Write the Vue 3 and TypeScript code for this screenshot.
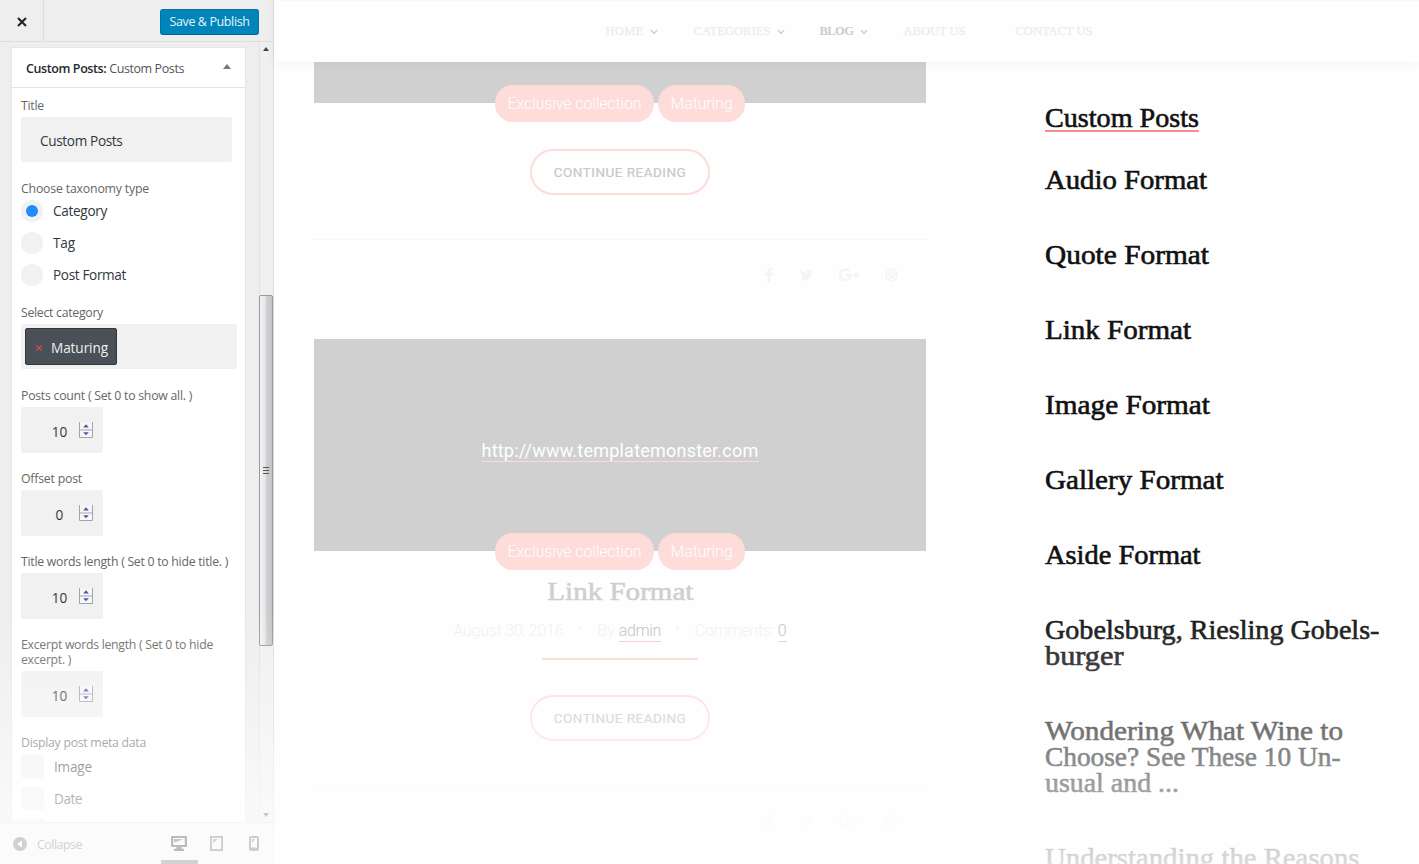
<script setup lang="ts">
interface FitLine { text: string; width: number }

// Makes a line of text fill the given width: by letter spacing, or by glyph width with .stretch.
const vFit = {
  mounted(el: HTMLElement, binding: { value: number; modifiers: Record<string, boolean> }) {
    const count = (el.textContent ?? '').trim().length
    const natural = el.getBoundingClientRect().width
    if (binding.modifiers.stretch) el.style.transform = `scaleX(${binding.value / natural})`
    else if (count > 1) el.style.letterSpacing = `${(binding.value - natural) / count}px`
  },
}

const taxonomies = [
  { label: 'Category', width: 54, on: true },
  { label: 'Tag', width: 22, on: false },
  { label: 'Post Format', width: 73, on: false },
]
const counters: { lines: FitLine[]; value: string }[] = [
  { lines: [{ text: 'Posts count ( Set 0 to show all. )', width: 171 }], value: '10' },
  { lines: [{ text: 'Offset post', width: 61 }], value: '0' },
  { lines: [{ text: 'Title words length ( Set 0 to hide title. )', width: 207 }], value: '10' },
  { lines: [{ text: 'Excerpt words length ( Set 0 to hide', width: 192 }, { text: 'excerpt. )', width: 50 }], value: '10' },
]
const metas: FitLine[] = [{ text: 'Image', width: 38 }, { text: 'Date', width: 28 }]

const nav = [
  { label: 'HOME', width: 38, menu: true, active: false },
  { label: 'CATEGORIES', width: 77, menu: true, active: false },
  { label: 'BLOG', width: 34, menu: true, active: true },
  { label: 'ABOUT US', width: 62, menu: false, active: false },
  { label: 'CONTACT US', width: 77, menu: false, active: false },
]
const tags: FitLine[] = [{ text: 'Exclusive collection', width: 134 }, { text: 'Maturing', width: 62 }]
const icons = [
  { name: 'facebook', w: 8, d: 'M7.6.2v2.2H6.3c-1 0-1.2.5-1.2 1.2v1.5h2.4l-.3 2.5H5.1V14H2.5V7.6H.4V5.1h2.1V3.3C2.500 1.200 3.800 0 5.700 0c.9 0 1.700.1 1.900.2z' },
  { name: 'twitter', w: 13, d: 'M13 3.100c-.4.5-.8 1-1.300 1.300v.4c0 3.500-2.600 7.500-7.500 7.500-1.500 0-2.900-.4-4.100-1.200 1.400.2 2.800-.2 3.900-1.100-1.200 0-2.100-.8-2.500-1.800.4.1.8.1 1.200-.1C1.500 7.900.6 6.800.6 5.500c.4.2.8.3 1.200.3C.6 5 .2 3.400 1 2.200c1.300 1.600 3.300 2.600 5.500 2.700C6.100 3.200 7.400 1.600 9.100 1.600c.8 0 1.400.3 1.900.8.6-.1 1.200-.3 1.700-.6-.2.6-.6 1.100-1.200 1.500.5-.1 1-.2 1.500-.2z' },
  { name: 'google', w: 20, d: 'M6.500 6v2.200h3.700c-.2 1-1.200 2.900-3.700 2.900a4.100 4.100 0 0 1 0-8.200c1.300 0 2.100.5 2.600 1l1.800-1.700A6.500 6.500 0 1 0 12.700 7.200c0-.4 0-.8-.1-1.200zM18 6V4.100h-1.900V6h-1.900v1.900h1.900v1.900H18V7.900h1.900V6z' },
  { name: 'pinterest', w: 13, d: 'M6.500.5a6.500 6.500 0 1 0 0 13 6.500 6.500 0 0 0 0-13zm0 1.500a5 5 0 1 1-1.100 9.900c.4-.7.6-1.500.9-2.500.3.4.7.6 1.200.6 1.700 0 2.800-1.600 2.800-3.500C10.300 4.600 9 3.300 7 3.300c-2.500 0-3.800 1.700-3.800 3.400 0 .8.400 1.700 1.100 2l.4-1c-.9-1.200-.2-3.300 2-3.300 3 0 2.400 4.500.8 4.500-.7 0-1-.5-.8-1.100.4-1.300.8-2.600-.3-2.600-1.300 0-1.500 1.600-1 2.600l-1 3.500A5 5 0 0 1 6.500 2z' },
]
const recent: FitLine[][] = [
  [{ text: 'Audio Format', width: 162 }],
  [{ text: 'Quote Format', width: 164 }],
  [{ text: 'Link Format', width: 146 }],
  [{ text: 'Image Format', width: 165 }],
  [{ text: 'Gallery Format', width: 178.5 }],
  [{ text: 'Aside Format', width: 155.5 }],
  [{ text: 'Gobelsburg, Riesling Gobels-', width: 334.5 }, { text: 'burger', width: 78.5 }],
  [{ text: 'Wondering What Wine to', width: 298 }, { text: 'Choose? See These 10 Un-', width: 295.5 }, { text: 'usual and ...', width: 134 }],
  [{ text: 'Understanding the Reasons', width: 314.5 }],
]
</script>

<template>
  <div class="screen">
    <aside class="customizer">
      <header class="bar">
        <button class="close" aria-label="Close">
          <svg width="10" height="10" viewBox="0 0 10 10"><path d="M1 1l8 8M9 1L1 9" stroke="#222" stroke-width="2.1" /></svg>
        </button>
        <button class="save"><span v-fit="80">Save &amp; Publish</span></button>
      </header>

      <div class="scroll">
        <section class="widget">
          <h3 class="widget-head">
            <span v-fit="158"><b>Custom Posts:</b> Custom Posts</span>
            <i class="toggle"></i>
          </h3>
          <div class="widget-body">
            <div class="field">
              <div class="label"><span v-fit="23">Title</span></div>
              <div class="text-input"><span v-fit="82.500">Custom Posts</span></div>
            </div>
            <div class="field">
              <div class="label"><span v-fit="128">Choose taxonomy type</span></div>
              <div v-for="t in taxonomies" :key="t.label" class="choice tax">
                <i class="radio" :class="{ on: t.on }"></i><span v-fit="t.width">{{ t.label }}</span>
              </div>
            </div>
            <div class="field">
              <div class="label"><span v-fit="82">Select category</span></div>
              <div class="select">
                <div class="chip">
                  <svg width="6" height="6" viewBox="0 0 6 6"><path d="M.5.5l5 5M5.500.5l-5 5" stroke="#d8484b" stroke-width="1.200" /></svg>
                  <span v-fit="57">Maturing</span>
                </div>
              </div>
            </div>
            <div v-for="c in counters" :key="c.lines[0].text" class="field">
              <div v-for="l in c.lines" :key="l.text" class="label"><span v-fit="l.width">{{ l.text }}</span></div>
              <div class="number">
                <span>{{ c.value }}</span>
                <svg width="14" height="16" viewBox="0 0 14 16">
                  <rect x=".5" y=".5" width="13" height="15" fill="#f7f7f7" />
                  <path d="M.5 0v15.500h13V0M.5 8h13" fill="none" stroke="#a3a3a8" />
                  <path d="M4.200 5.500h5.600L7 2.300zM4.200 10.300h5.600L7 13.300z" fill="#4557b0" />
                </svg>
              </div>
            </div>
            <div class="field">
              <div class="label"><span v-fit="125">Display post meta data</span></div>
              <div v-for="m in metas" :key="m.text" class="choice meta-choice">
                <i class="check"></i><span v-fit="m.width">{{ m.text }}</span>
              </div>
              <div class="choice meta-choice"><i class="check"></i></div>
            </div>
          </div>
        </section>
        <div class="track">
          <i class="arrow up"></i>
          <div class="thumb"><i></i><i></i><i></i></div>
          <i class="arrow down"></i>
        </div>
      </div>

      <footer class="foot">
        <svg class="collapse-icon" width="14" height="14" viewBox="0 0 14 14"><circle cx="7" cy="7" r="7" fill="#cfd1d2" /><path d="M9 3.600v6.800L4 7z" fill="#fff" /></svg>
        <div class="collapse"><span v-fit="45">Collapse</span></div>
        <div class="device active">
          <svg width="16" height="15" viewBox="0 0 16 15"><path fill="#babbbd" fill-rule="evenodd" d="M1 0h14q1 0 1 1v9q0 1-1 1h-4.500v1.800H13V15H3v-2.200h2.500V11H1q-1 0-1-1V1q0-1 1-1zm1.200 2v7h11.600V2z" /><path d="M3 3h9L8 5 3 6.500z" fill="#c6c7c8" /></svg>
        </div>
        <div class="device">
          <svg width="13" height="15" viewBox="0 0 13 15"><rect x=".9" y=".9" width="11.200" height="13.200" fill="#fbfbfb" stroke="#ccc" stroke-width="1.800" /><path d="M3 3h5L3 7z" fill="#d3d3d3" /></svg>
        </div>
        <div class="device">
          <svg width="10" height="15" viewBox="0 0 10 15"><rect x="1" y="1" width="8" height="13" rx="1" fill="#fbfbfb" stroke="#ccc" stroke-width="2" /><path d="M3 3h3L3 7zM2 11.500h6V14H2z" fill="#ccc" /></svg>
        </div>
      </footer>
    </aside>

    <main class="site">
      <nav class="nav">
        <a v-for="n in nav" :key="n.label" :class="{ active: n.active }">
          <span v-fit="n.width">{{ n.label }}</span>
          <svg v-if="n.menu" width="8" height="6" viewBox="0 0 8 6"><path d="M.8 1L4 4.300 7.200 1" fill="none" stroke="#d3d3d3" stroke-width="1.500" /></svg>
        </a>
      </nav>

      <div class="columns">
        <div class="posts">
          <article class="post">
            <div class="media short"></div>
            <div class="tags"><span v-for="t in tags" :key="t.text" class="tag"><span v-fit="t.width">{{ t.text }}</span></span></div>
            <a class="more first"><span v-fit="132.500">CONTINUE READING</span></a>
            <div class="share">
              <svg v-for="i in icons" :key="i.name" :class="i.name" :width="i.w" height="14" :viewBox="`0 0 ${i.w} 14`"><path :d="i.d" /></svg>
            </div>
          </article>
          <article class="post second">
            <div class="media"><a class="url"><span v-fit="277">http://www.templatemonster.com</span></a></div>
            <div class="tags"><span v-for="t in tags" :key="t.text" class="tag"><span v-fit="t.width">{{ t.text }}</span></span></div>
            <h2 class="post-title"><span v-fit.stretch="146">Link Format</span></h2>
            <div class="post-meta">
              <span v-fit="110">August 30, 2016</span><i></i>
              <span v-fit="17.500">By</span><a><span v-fit="42">admin</span></a><i></i>
              <span v-fit="79">Comments:</span><a class="count"><span>0</span></a>
            </div>
            <hr class="rule" />
            <a class="more pale"><span v-fit="132.500">CONTINUE READING</span></a>
            <div class="share faint">
              <svg v-for="i in icons" :key="i.name" :class="i.name" :width="i.w" height="14" :viewBox="`0 0 ${i.w} 14`"><path :d="i.d" /></svg>
            </div>
          </article>
        </div>

        <div class="recent">
          <h2><span v-fit.stretch="154">Custom Posts</span></h2>
          <h3 v-for="r in recent" :key="r[0].text">
            <div v-for="l in r" :key="l.text"><span v-fit.stretch="l.width">{{ l.text }}</span></div>
          </h3>
        </div>
      </div>
    </main>
    <div class="fade"></div>
  </div>
</template>

<style>
body { margin: 0; background: #fff; overflow: hidden; }
</style>

<style scoped>
* { box-sizing: border-box; }
h2, h3 { margin: 0; font-weight: normal; }
span { display: inline-block; white-space: nowrap; }
svg, i { display: block; flex: none; }
button { border: 0; padding: 0; font: inherit; }
.screen { position: relative; display: flex; width: 1419px; height: 864px; overflow: hidden; background: #fefefe; }

.customizer { width: 274px; flex: none; display: flex; flex-direction: column; background: #eee; border-right: 1px solid #ddd; font-family: "Open Sans", "Noto Sans", sans-serif; color: #32373c; }
.bar { height: 42px; flex: none; display: flex; align-items: center; justify-content: space-between; border-bottom: 1px solid #ddd; padding-right: 14px; }
.close { width: 44px; height: 41px; display: flex; align-items: center; justify-content: center; background: #eee; border-right: 1px solid #ddd; padding-top: 3px; }
.save { width: 99px; height: 26px; background: #0085ba; border: 1px solid #0073aa; border-bottom-color: #006799; border-radius: 3px; color: #e6f4fa; font-size: 12.500px; line-height: 23px; margin-top: 2px; }
.scroll { flex: 1; min-height: 0; overflow: hidden; display: flex; justify-content: space-between; }
.widget { width: 235px; margin: 5px 0 0 11px; height: 900px; background: #fff; border: 1px solid #e5e5e5; }
.widget-head { height: 40px; border-bottom: 1px solid #e5e5e5; display: flex; align-items: center; justify-content: space-between; padding: 1px 14px 0 14px; font-size: 12.500px; color: #555; }
.widget-head b { font-weight: 600; color: #23282d; }
.toggle { border: 4px solid transparent; border-top: 0; border-bottom: 5px solid #72777c; margin-top: -3px; }
.widget-body { padding: 10px 9px; }
.field { margin-bottom: 19px; }
.label { height: 15px; line-height: 15px; font-size: 12.300px; color: #666; }
.text-input { margin-top: 4px; width: 211px; height: 45px; background: #f1f1f1; border-radius: 2px; padding-left: 19px; font-size: 13.600px; line-height: 47px; }
.choice { display: flex; align-items: center; gap: 10px; height: 22px; margin-bottom: 10px; font-size: 13.600px; }
.tax span { margin-top: -2px; }
.label + .choice { margin-top: 4px; }
.choice:last-child { margin-bottom: 0; }
.radio { width: 22px; height: 22px; border-radius: 50%; background: #f1f1f1; display: flex; align-items: center; justify-content: center; }
.radio.on::after { content: ""; width: 12px; height: 12px; border-radius: 50%; background: #1e8cff; }
.check { width: 23px; height: 23px; border-radius: 2px; background: #f1f1f1; }
.label + .meta-choice { margin-top: 5px; }
.select { margin-top: 4px; width: 216px; height: 45px; background: #f1f1f1; border-radius: 2px; padding: 4px; }
.chip { width: 92px; height: 37px; display: flex; align-items: center; gap: 9px; padding: 2px 0 0 10px; background: #495057; border: 1px solid #32373c; border-radius: 2px; color: #eee; font-size: 13.600px; }
.number { margin-top: 4px; width: 82px; height: 46px; margin-bottom: -1px; background: #f1f1f1; border-radius: 2px; display: flex; align-items: center; font-size: 13.600px; }
.number span { width: 58px; text-align: center; padding: 2px 0 0 19px; }

.track { width: 14px; background: #f0f0f0; border-left: 1px solid #e2e2e2; display: flex; flex-direction: column; align-items: center; padding: 5px 1px 5px 0; }
.arrow { border: 3px solid transparent; }
.arrow.up { border-top: 0; border-bottom: 4px solid #444; }
.arrow.down { border-bottom: 0; border-top: 4px solid #555; margin-top: auto; }
.thumb { width: 14px; height: 351px; margin-top: 244px; margin-left: -1px; flex: none; border: 1px solid #999; border-radius: 2px; background: linear-gradient(90deg, #f4f4f4, #e4e4e6 45%, #cfcfd3 55%, #c4c4c8); display: flex; flex-direction: column; justify-content: center; align-items: center; gap: 2px; }
.thumb i { width: 6px; height: 1px; background: #555; }

.foot { position: relative; z-index: 2; height: 42px; flex: none; display: flex; align-items: center; background: #fbfbfb; border-top: 1px solid #f5f5f5; padding-left: 13px; }
.collapse { margin-left: 10px; width: 124px; font-size: 12.500px; color: #d2d4d5; padding-top: 1px; }
.device { width: 37.500px; height: 41px; flex: none; display: flex; align-items: center; justify-content: center; padding-top: 3px; border-bottom: 4px solid transparent; }
.device.active { border-bottom-color: #d2d2d2; }

.site { flex: 1; min-width: 0; display: flex; flex-direction: column; }
.nav { position: relative; z-index: 1; height: 62px; flex: none; display: grid; grid-template-columns: 88px 126px 84px 112px 100px; align-items: center; padding-left: 331.500px; background: #fefefe; border-top: 1px solid #f9f9f9; box-shadow: 0 1px 10px rgba(0, 0, 0, .05); font-family: "Liberation Serif", serif; font-size: 12.500px; color: #ececec; -webkit-text-stroke: .25px #ececec; }
.nav a { display: flex; align-items: center; gap: 6px; }
.nav .active { color: #ccc; font-weight: bold; -webkit-text-stroke: 0; }
.columns { flex: 1; min-height: 0; display: flex; padding-left: 40px; }
.posts { width: 612px; flex: none; font-family: Roboto, sans-serif; }
.post { display: flex; flex-direction: column; align-items: center; height: 277px; }
.post.second { height: 525px; }
.media { width: 612px; height: 212px; flex: none; background: #d0d0d0; display: flex; justify-content: center; }
.media.short { height: 41px; }
.url { margin-top: 101px; height: 22px; line-height: 21px; font-size: 18px; color: #fff; border-bottom: 1px solid #fbdcdc; }
.tags { display: flex; gap: 4px; margin-top: -18px; height: 36px; flex: none; }
.tag { height: 36.500px; padding: 0 12.500px; border-radius: 18px; background: #fddcda; color: #fff; font-size: 16px; font-weight: 300; line-height: 38px; }
.second .tag { line-height: 37px; }
.more { width: 180px; height: 46px; flex: none; border: 2px solid #fddcda; border-radius: 23px; text-align: center; font-size: 13.500px; line-height: 43px; color: #c8c8c8; -webkit-text-stroke: .2px; }
.more.first { margin-top: 28px; }
.more.pale { margin-top: 35px; }
.share { width: 612px; margin-top: 44px; border-top: 1px solid #f7f7f7; padding: 28px 28px 0 0; display: flex; justify-content: flex-end; fill: #f4f4f4; }
.facebook { margin-right: 27px; }
.twitter { margin-right: 26px; }
.google { margin-right: 26px; }
.share.faint { border-color: #fcfcfc; fill: #f6f6f6; }
.post-title { margin-top: 9px; height: 28px; line-height: 28px; font-family: "Liberation Serif", serif; font-size: 26px; color: #cfcfcf; -webkit-text-stroke: .6px #cfcfcf; }
.post-meta { display: flex; align-items: center; height: 22px; margin-top: 14px; font-size: 16px; font-weight: 300; color: #f0f0f0; white-space: nowrap; }
.post-meta > span { margin-top: -2px; }
.post-meta a { height: 22px; line-height: 21px; margin-left: 4px; color: #c0c0c0; border-bottom: 1px solid #fcc8c5; }
.post-meta i { width: 3px; height: 3px; border-radius: 50%; background: #f2f2f2; margin: -5px 15.500px 0; }
.rule { width: 156px; height: 2px; margin: 16px 0 0; border: 0; background: #fcd3d1; flex: none; }

.recent { margin-left: 119px; padding-top: 44px; font-family: "Liberation Serif", serif; font-size: 26.500px; line-height: 25.700px; color: #111; -webkit-text-stroke: .6px; }
.recent h2, .recent h3 { font-size: inherit; }
.recent h2 { height: 26px; margin-bottom: 36px; }
.recent h2 span { height: 26px; line-height: 25.700px; border-bottom: 2px solid #f98b88; }
.recent h3 { margin-bottom: 49.400px; }
.recent h3 div { height: 25.700px; }
.recent span { vertical-align: top; transform-origin: left; }

.fade { position: absolute; z-index: 1; left: 0; right: 0; top: 610px; bottom: 0; background: linear-gradient(rgba(254, 254, 254, 0), rgba(254, 254, 254, .85)); pointer-events: none; }
</style>
